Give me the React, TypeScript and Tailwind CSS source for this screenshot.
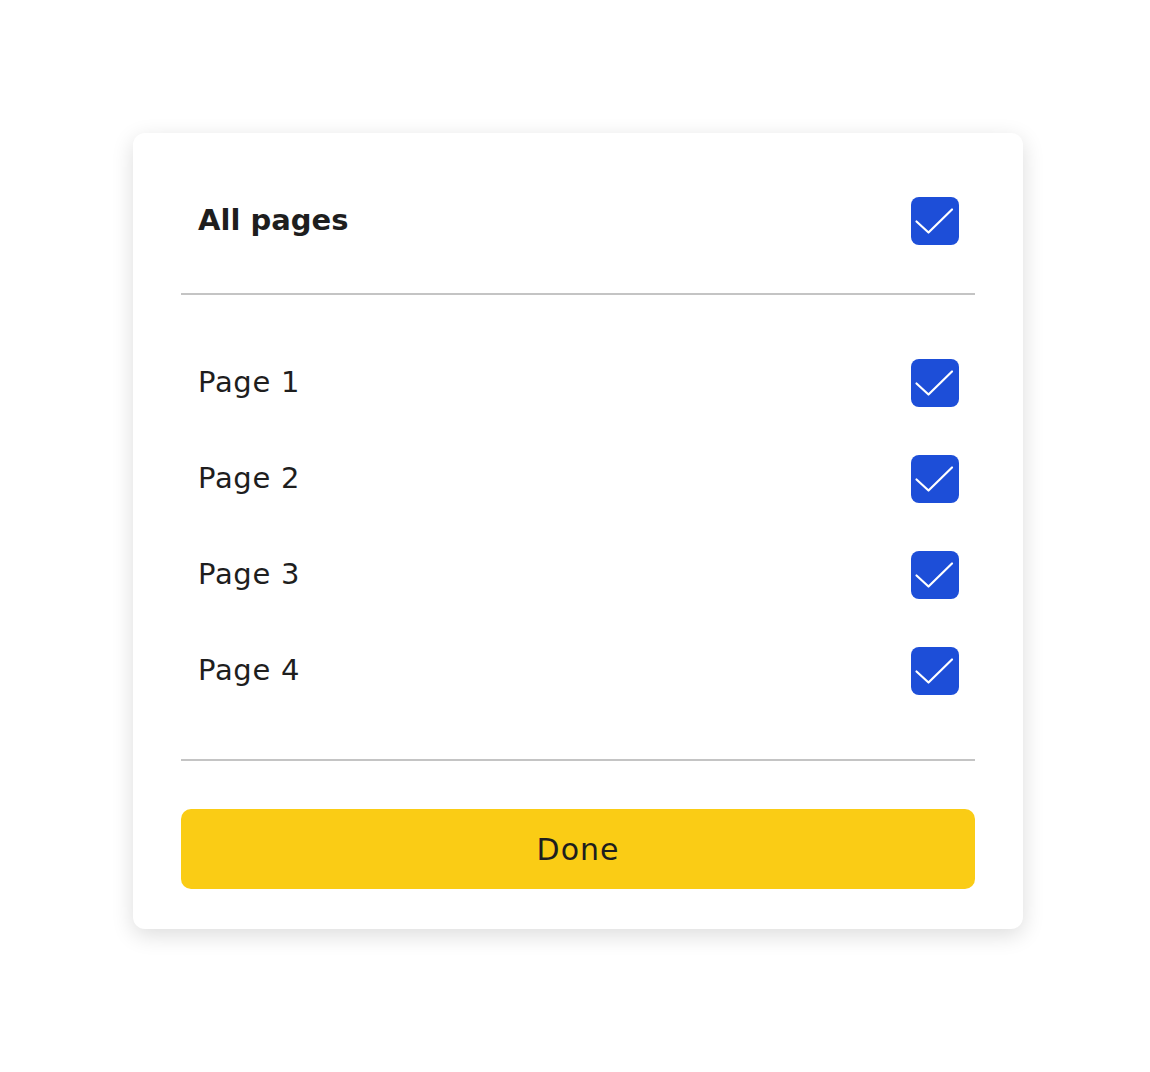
function Check() {
  return (
    <div className="w-12 h-12 rounded-lg bg-[#1d4ed8] flex-none">
      <svg width="48" height="48" viewBox="0 0 48 48" fill="none">
        <path
          d="M5.5 24.5 17.5 35.5 41 12.5"
          stroke="white"
          strokeWidth="2.2"
          strokeLinecap="round"
          strokeLinejoin="round"
        />
      </svg>
    </div>
  );
}

const paginas: string[] = ["Page 1", "Page 2", "Page 3", "Page 4"];

function App() {
  return (
    <div
      className="min-h-screen bg-white pt-[133px] pl-[133px]"
      style={{ fontFamily: "'DejaVu Sans', 'Liberation Sans', sans-serif" }}
    >
      <div className="w-[890px] bg-white rounded-xl shadow-[0_6px_22px_rgba(0,0,0,0.14)] px-12 pt-12 pb-10 text-[#1e1e1e]">
        <div className="flex items-center justify-between pl-[17px] pr-4 py-4">
          <span className="text-[29px] font-bold">All pages</span>
          <Check />
        </div>
        <div className="mt-8 h-[2px] bg-[#c4c4c4]"></div>
        <div className="mt-12 flex flex-col gap-4">
          {paginas.map((p) => (
            <div key={p} className="flex items-center justify-between pl-[17px] pr-4 py-4">
              <span className="text-[29px] font-normal tracking-[0.7px]">{p}</span>
              <Check />
            </div>
          ))}
        </div>
        <div className="mt-12 h-[2px] bg-[#c4c4c4]"></div>
        <button className="mt-12 w-full h-20 rounded-[10px] bg-[#facc15] text-[30px] tracking-[1px] text-[#1e1e1e]">
          Done
        </button>
      </div>
    </div>
  );
}

export default App;
